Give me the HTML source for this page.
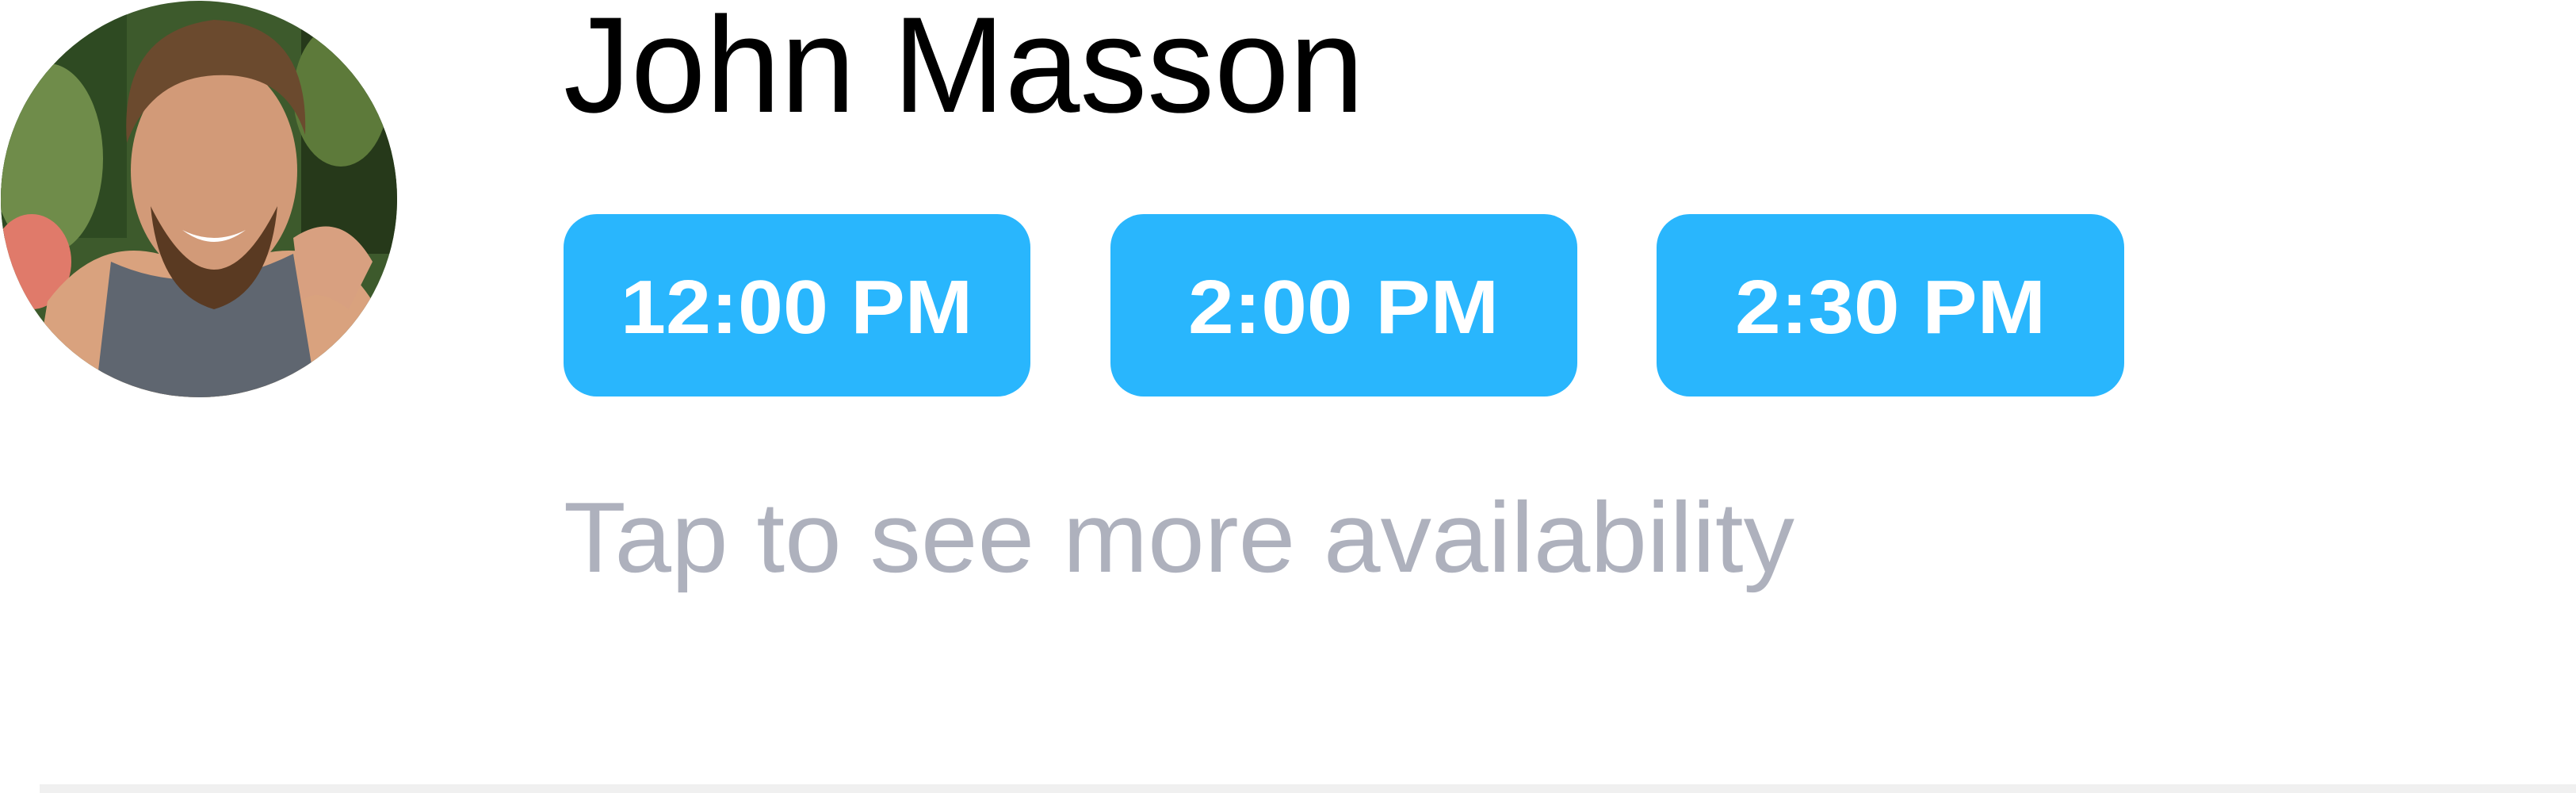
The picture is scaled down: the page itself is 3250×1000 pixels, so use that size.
<!DOCTYPE html>
<html><head><style>html,body{margin:0;padding:0;background:#fff;width:3250px;height:1000px;overflow:hidden}</style></head>
<body>
<svg width="3250" height="1000" viewBox="0 0 3250 1000" xmlns="http://www.w3.org/2000/svg">
<defs><clipPath id="c"><circle cx="251" cy="251" r="250"/></clipPath></defs>
<g clip-path="url(#c)">
<rect x="0" y="0" width="502" height="502" fill="#3d5a2c"/>
<rect x="0" y="0" width="160" height="300" fill="#2e4a22"/>
<rect x="380" y="0" width="130" height="320" fill="#26391a"/>
<ellipse cx="60" cy="200" rx="70" ry="120" fill="#6f8c4a"/>
<ellipse cx="430" cy="120" rx="60" ry="90" fill="#5d7a3a"/>
<ellipse cx="40" cy="330" rx="50" ry="60" fill="#e07a6a"/>
<path d="M40 502 L60 380 Q120 300 200 320 L330 320 Q420 300 470 380 L490 502 Z" fill="#d9a27e"/>
<path d="M120 502 L140 330 Q250 380 370 320 L400 502 Z" fill="#5f6670"/>
<ellipse cx="270" cy="215" rx="105" ry="140" fill="#d29a78"/>
<path d="M160 180 Q150 40 270 25 Q390 30 385 170 Q360 90 270 95 Q190 100 160 180 Z" fill="#6b4a2e"/>
<path d="M190 260 Q270 420 350 260 Q340 370 270 390 Q200 370 190 260 Z" fill="#5a3a22"/>
<path d="M230 290 Q270 310 310 290 Q270 320 230 290 Z" fill="#fff"/>
<path d="M370 300 Q430 260 470 330 L440 390 Q400 360 380 380 Z" fill="#d8a080"/>
</g>
<text x="711" y="141" font-family="Liberation Sans, sans-serif" font-size="172" fill="#000" textLength="1010" lengthAdjust="spacingAndGlyphs">John Masson</text>
<g font-family="Liberation Sans, sans-serif" font-size="96" font-weight="bold" fill="#fff" text-anchor="middle">
<rect x="711" y="270" width="589" height="230" rx="42" fill="#29b6fd"/>
<text x="1005" y="420" textLength="444" lengthAdjust="spacingAndGlyphs">12:00 PM</text>
<rect x="1401" y="270" width="589" height="230" rx="42" fill="#29b6fd"/>
<text x="1695" y="420" textLength="392" lengthAdjust="spacingAndGlyphs">2:00 PM</text>
<rect x="2090" y="270" width="590" height="230" rx="42" fill="#29b6fd"/>
<text x="2385" y="420" textLength="392" lengthAdjust="spacingAndGlyphs">2:30 PM</text>
</g>
<text x="711" y="721" font-family="Liberation Sans, sans-serif" font-size="126" fill="#aeb1bd" textLength="1553" lengthAdjust="spacingAndGlyphs">Tap to see more availability</text>
<rect x="50" y="989" width="3200" height="11" fill="#f0f0f0"/>
</svg>
</body></html>
